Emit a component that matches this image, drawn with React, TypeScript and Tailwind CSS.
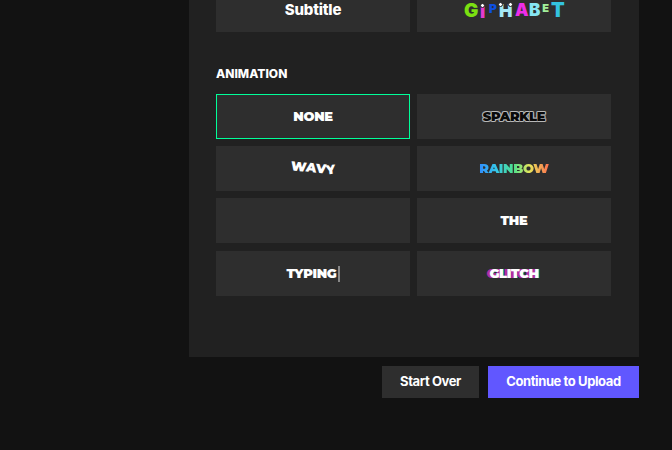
import React from 'react';

const tile = 'h-[45px] bg-[#2e2e2e] flex items-center justify-center text-white';
const caps = "font-['Montserrat','Inter',sans-serif] text-[13px] font-black leading-none tracking-[-0.3px]";

const eye = 'absolute w-[5px] h-[5px] rounded-full bg-white border border-[#222]';

const giphabet = [
    { c: 'G', cls: 'text-[#7be011] text-[19px] w-[13px]', eyes: [] },
    { c: 'I', cls: 'text-[#e63bd0] text-[18px] w-[7px] ml-[2px] translate-y-[1px]', eyes: ['-top-[1px] left-[1px]'] },
    { c: 'P', cls: 'text-[#0f4fe0] text-[12px] w-[8px] ml-[3px] -translate-y-[2px]', eyes: [] },
    { c: 'H', cls: 'text-[#a5e8f5] text-[18px] w-[13px] ml-[2px]', eyes: ['-top-[1px] -left-[1px]', '-top-[1px] right-[-1px]'] },
    { c: 'A', cls: 'text-[#ee2de8] text-[17px] w-[11px] ml-[3px]', eyes: [] },
    { c: 'B', cls: 'text-[#86e5f2] text-[17px] w-[10px] ml-[3px]', eyes: [] },
    { c: 'E', cls: 'text-[#a2ee9a] text-[11px] w-[7px] ml-[3px] -translate-y-[2px]', eyes: [] },
    { c: 'T', cls: 'text-[#33c3df] text-[20px] w-[13px] ml-[2px]', eyes: [] },
];

const App: React.FC = () => (
    <div className="h-[450px] overflow-hidden bg-[#121212] pl-[189px] pr-[33px] font-['Inter',sans-serif]">
        <div className="-mt-[13px] bg-[#212121] pl-[27px] pr-[28px] pb-[61px]">
            <div className="grid grid-cols-2 gap-[7px]">
                <div className={tile}>
                    <span className="text-[15px] font-extrabold leading-none tracking-[-0.2px]">Subtitle</span>
                </div>
                <div className={tile}>
                    <div className="flex items-end h-[15px] font-black translate-y-[1px]">
                        {giphabet.map((l, i) => (
                            <span key={i} className={`relative block text-center leading-[15px] ${l.cls}`}>
                                {l.c}
                                {l.eyes.map((e, j) => <span key={j} className={`${eye} ${e}`}></span>)}
                            </span>
                        ))}
                    </div>
                </div>
            </div>

            <p className="text-[12px] font-extrabold leading-none text-white mt-[36px] mb-[15px] h-[11px]">ANIMATION</p>

            <div className="grid grid-cols-2 gap-x-[7px] gap-y-[7px]">
                <div className={`${tile} border border-[#00ff99]`}>
                    <span className={caps}>NONE</span>
                </div>
                <div className={tile}>
                    <span className={`${caps} text-[#0a0a0a] [text-shadow:1px_0_0_#b8b8b8,-1px_0_0_#b8b8b8,0_1px_0_#b8b8b8,0_-1px_0_#b8b8b8,1px_1px_0_#8a8a8a,-1px_-1px_0_#8a8a8a,1px_-1px_0_#8a8a8a,-1px_1px_0_#8a8a8a]`}>SPARKLE</span>
                </div>
                <div className={tile}>
                    <span className={`${caps} flex -translate-y-[1px]`}>
                        <span className="block -translate-y-[1px] rotate-[6deg]">W</span>
                        <span className="block rotate-[8deg]">A</span>
                        <span className="block translate-y-[1px] rotate-[4deg]">V</span>
                        <span className="block translate-y-[2px] -rotate-[6deg]">Y</span>
                    </span>
                </div>
                <div className={tile}>
                    <span className={`${caps} text-transparent bg-clip-text bg-[linear-gradient(90deg,#2f8cff_0%,#35c8e8_25%,#4fe08a_50%,#e6e65a_72%,#ff6f4e_100%)]`}>RAINBOW</span>
                </div>
                <div className={tile}></div>
                <div className={tile}>
                    <span className={caps}>THE</span>
                </div>
                <div className={`${tile} mt-[1px]`}>
                    <span className={`${caps} border-r-2 border-[#888] h-[16px] flex items-center pr-[1px]`}>TYPING</span>
                </div>
                <div className={`${tile} mt-[1px]`}>
                    <span className={`${caps} [text-shadow:-3px_0_0_#b32ea0,1px_0_0_#10c4b8]`}>GLITCH</span>
                </div>
            </div>
        </div>

        <div className="flex justify-end gap-[9px] mt-[9px] text-[13px] font-bold text-white tracking-[-0.4px]">
            <button className="w-[97px] h-[32px] bg-[#2e2e2e]">Start Over</button>
            <button className="w-[151px] h-[32px] bg-[#6157ff]">Continue to Upload</button>
        </div>
    </div>
);

export default App;
